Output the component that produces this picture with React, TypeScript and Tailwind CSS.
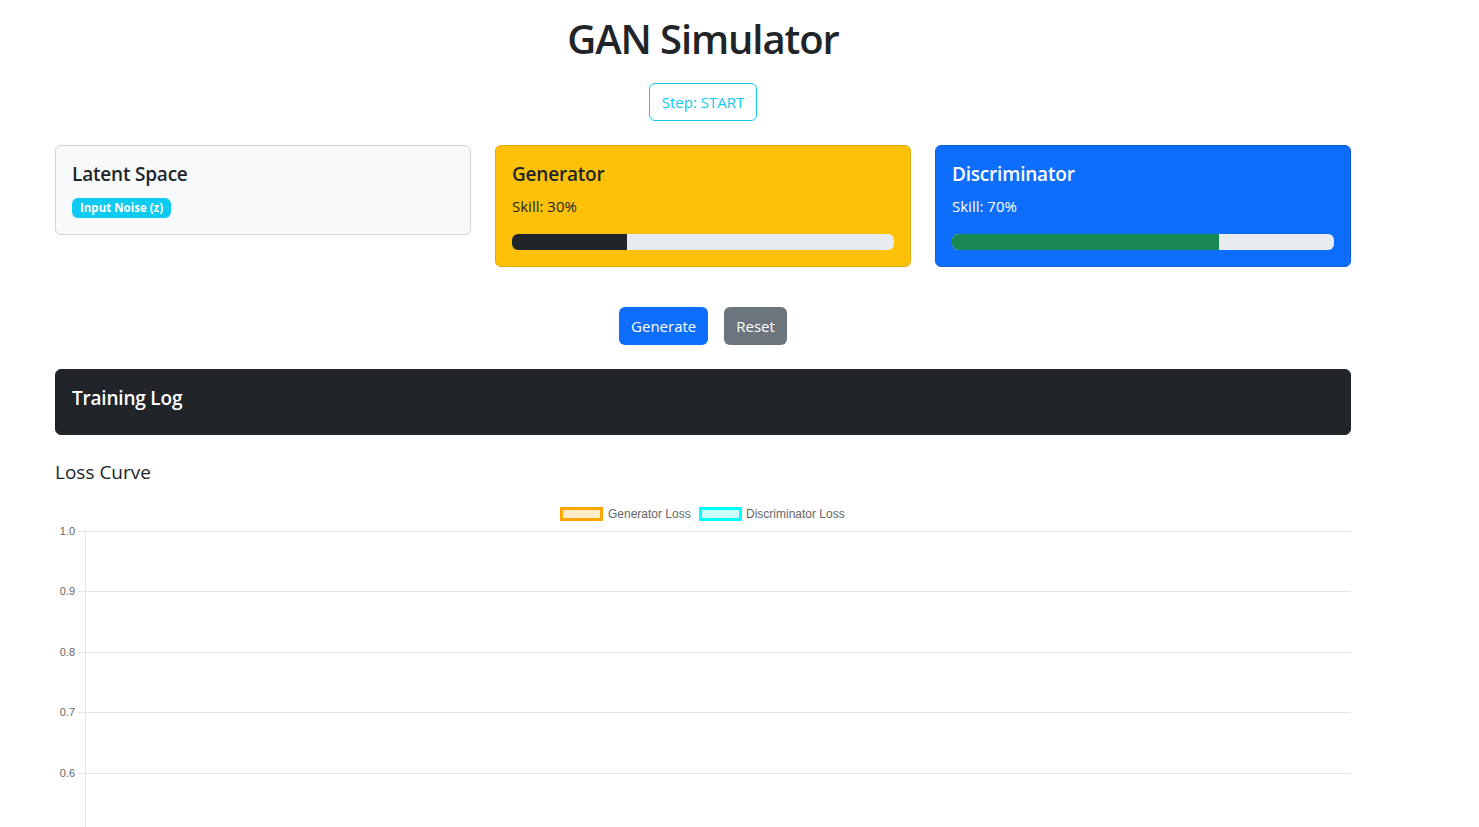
import React from 'react'

interface Agent {
    name: string;
    skill: number;
    card: string;
    text: string;
    fill: string;
}

const agents: Agent[] = [
    { name: 'Generator', skill: 30, card: 'bg-[#ffc107] border-[#e0ac08]', text: 'text-[#212529]', fill: 'bg-[#212529]' },
    { name: 'Discriminator', skill: 70, card: 'bg-[#0d6efd] border-[#0b5ed7]', text: 'text-white', fill: 'bg-[#198754]' },
]

const ticks = [
    { label: '1.0', y: 31.5 },
    { label: '0.9', y: 91.5 },
    { label: '0.8', y: 152.5 },
    { label: '0.7', y: 212.5 },
    { label: '0.6', y: 273.5 },
]

function LossChart() {
    return (
        <svg width="1296" height="330" className="block" style={{ fontFamily: '"Liberation Sans", Arial, sans-serif' }}>
            {/* legend */}
            <rect x="506.5" y="8.5" width="40" height="11" fill="rgba(255,165,0,0.2)" stroke="#ffa500" strokeWidth="3" />
            <text x="553" y="18" fontSize="12" fill="#666">Generator Loss</text>
            <rect x="645.5" y="8.5" width="40" height="11" fill="rgba(0,255,255,0.2)" stroke="#00ffff" strokeWidth="3" />
            <text x="691" y="18" fontSize="12" fill="#666">Discriminator Loss</text>

            {ticks.map((t) => (
                <g key={t.label}>
                    <line x1="23" x2="1296" y1={t.y} y2={t.y} stroke="#e5e5e5" strokeWidth="1" />
                    <text x="20" y={t.y + 3} fontSize="11" fill="#666" textAnchor="end">{t.label}</text>
                </g>
            ))}
            <line x1="23" x2="1296" y1="333.5" y2="333.5" stroke="#e5e5e5" strokeWidth="1" />
            <line x1="30.5" x2="30.5" y1="31" y2="330" stroke="#e5e5e5" strokeWidth="1" />
        </svg>
    )
}

export default function App() {
    return (
        <div className="min-h-screen bg-white text-[#212529]" style={{ fontFamily: '"Open Sans", "Noto Sans", sans-serif' }}>
            <div className="w-[1296px] ml-[55px]">
                <h1 className="pt-[15px] text-center text-[40px] leading-[48px] font-semibold tracking-[-1.1px]">GAN Simulator</h1>

                <div className="mt-[20px] flex justify-center">
                    <span className="border border-[#0dcaf0] text-[#0dcaf0] rounded-md px-3 py-1.5 text-[15px] leading-6">Step: START</span>
                </div>

                <div className="mt-6 grid grid-cols-3 gap-6 items-start">
                    <div className="bg-[#f8f9fa] border border-[#d3d4d5] rounded-md p-4">
                        <h5 className="text-[19px] leading-6 font-semibold mb-2 tracking-[-0.2px]">Latent Space</h5>
                        <span className="inline-block bg-[#0dcaf0] text-white text-[11.5px] font-bold leading-none rounded-md px-2 py-[4px]">Input Noise (z)</span>
                    </div>

                    {agents.map((a) => (
                        <div key={a.name} className={`${a.card} ${a.text} border rounded-md p-4`}>
                            <h5 className="text-[19px] leading-6 font-semibold mb-2 tracking-[-0.2px]">{a.name}</h5>
                            <p className="text-[15px] leading-6">Skill: {a.skill}%</p>
                            <div className="mt-4 h-4 rounded-md bg-[#e9ecef] overflow-hidden">
                                <div className={`h-full ${a.fill}`} style={{ width: `${a.skill}%` }} />
                            </div>
                        </div>
                    ))}
                </div>

                <div className="mt-10 flex justify-center gap-4">
                    <button className="bg-[#0d6efd] text-white rounded-md px-3 py-[7px] text-[15px] leading-6">Generate</button>
                    <button className="bg-[#6c757d] text-white rounded-md px-3 py-[7px] text-[15px] leading-6">Reset</button>
                </div>

                <div className="mt-6 bg-[#212529] border border-[#212529] rounded-md px-4 pt-4 pb-6">
                    <h5 className="text-[19px] leading-6 font-semibold text-white tracking-[-0.2px]">Training Log</h5>
                </div>

                <h5 className="mt-[25px] text-[19px] leading-6 font-medium">Loss Curve</h5>

                <div className="mt-4">
                    <LossChart />
                </div>
            </div>
        </div>
    )
}
